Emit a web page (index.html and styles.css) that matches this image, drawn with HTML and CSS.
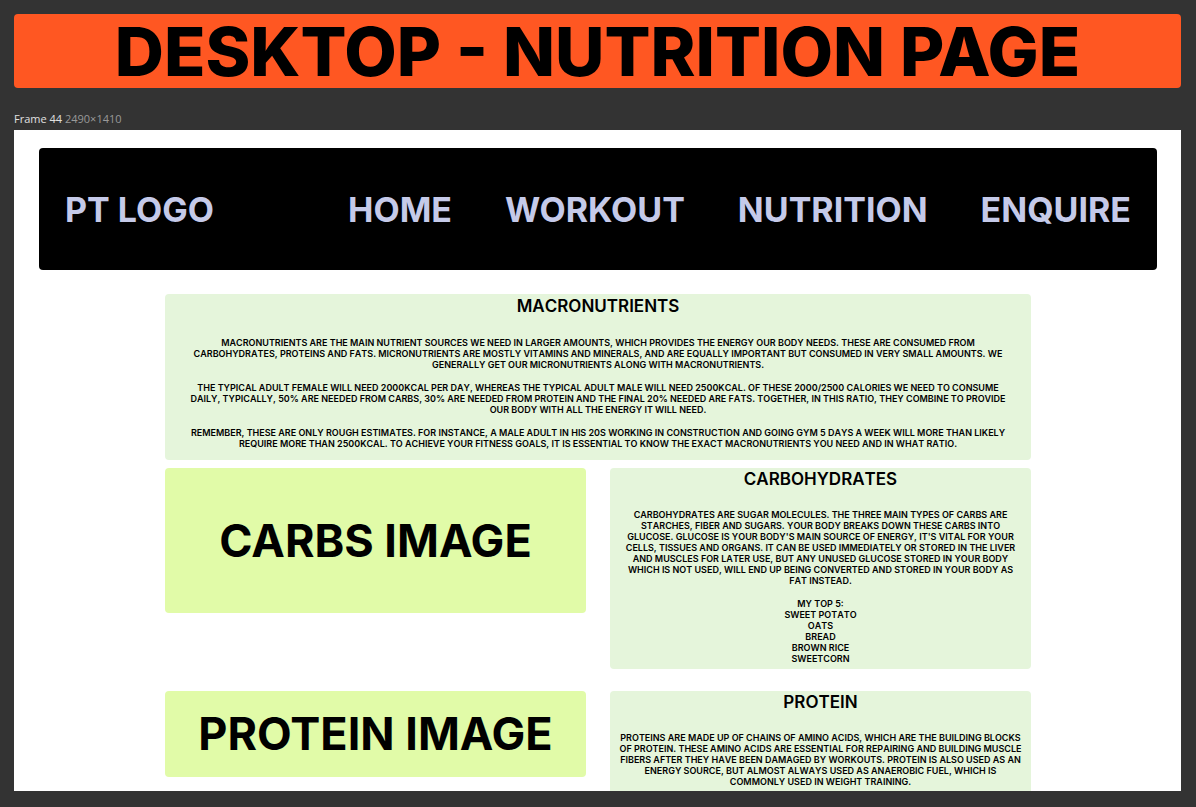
FILE: index.html
```html
<!DOCTYPE html>
<html lang="en">
<head>
<meta charset="utf-8">
<meta name="viewport" content="width=device-width, initial-scale=1">
<title>Desktop - Nutrition Page</title>
<link rel="stylesheet" href="styles.css">
</head>
<body>
<h1 class="banner">DESKTOP - NUTRITION PAGE</h1>
<p class="frame-label"><span class="frame-name">Frame 44</span> 2490×1410</p>
<div class="frame">
  <header class="nav">
    <a class="logo" href="#">PT LOGO</a>
    <nav class="links">
      <a href="#">HOME</a>
      <a href="#">WORKOUT</a>
      <a href="#">NUTRITION</a>
      <a href="#">ENQUIRE</a>
    </nav>
  </header>
  <main class="content">
    <section class="card intro">
      <h2>MACRONUTRIENTS</h2>
      <p>MACRONUTRIENTS ARE THE MAIN NUTRIENT SOURCES WE NEED IN LARGER AMOUNTS, WHICH PROVIDES THE ENERGY OUR BODY NEEDS. THESE ARE CONSUMED FROM<br>CARBOHYDRATES, PROTEINS AND FATS. MICRONUTRIENTS ARE MOSTLY VITAMINS AND MINERALS, AND ARE EQUALLY IMPORTANT BUT CONSUMED IN VERY SMALL AMOUNTS. WE<br>GENERALLY GET OUR MICRONUTRIENTS ALONG WITH MACRONUTRIENTS.</p>
      <p>THE TYPICAL ADULT FEMALE WILL NEED 2000KCAL PER DAY, WHEREAS THE TYPICAL ADULT MALE WILL NEED 2500KCAL. OF THESE 2000/2500 CALORIES WE NEED TO CONSUME<br>DAILY, TYPICALLY, 50% ARE NEEDED FROM CARBS, 30% ARE NEEDED FROM PROTEIN AND THE FINAL 20% NEEDED ARE FATS. TOGETHER, IN THIS RATIO, THEY COMBINE TO PROVIDE<br>OUR BODY WITH ALL THE ENERGY IT WILL NEED.</p>
      <p>REMEMBER, THESE ARE ONLY ROUGH ESTIMATES. FOR INSTANCE, A MALE ADULT IN HIS 20S WORKING IN CONSTRUCTION AND GOING GYM 5 DAYS A WEEK WILL MORE THAN LIKELY<br>REQUIRE MORE THAN 2500KCAL. TO ACHIEVE YOUR FITNESS GOALS, IT IS ESSENTIAL TO KNOW THE EXACT MACRONUTRIENTS YOU NEED AND IN WHAT RATIO.</p>
    </section>
    <div class="row">
      <div class="image carbs">CARBS IMAGE</div>
      <section class="card">
        <h2>CARBOHYDRATES</h2>
        <p>CARBOHYDRATES ARE SUGAR MOLECULES. THE THREE MAIN TYPES OF CARBS ARE<br>STARCHES, FIBER AND SUGARS. YOUR BODY BREAKS DOWN THESE CARBS INTO<br>GLUCOSE. GLUCOSE IS YOUR BODY'S MAIN SOURCE OF ENERGY, IT'S VITAL FOR YOUR<br>CELLS, TISSUES AND ORGANS. IT CAN BE USED IMMEDIATELY OR STORED IN THE LIVER<br>AND MUSCLES FOR LATER USE, BUT ANY UNUSED GLUCOSE STORED IN YOUR BODY<br>WHICH IS NOT USED, WILL END UP BEING CONVERTED AND STORED IN YOUR BODY AS<br>FAT INSTEAD.</p>
        <p>MY TOP 5:<br>SWEET POTATO<br>OATS<br>BREAD<br>BROWN RICE<br>SWEETCORN</p>
      </section>
    </div>
    <div class="row">
      <div class="image protein">PROTEIN IMAGE</div>
      <section class="card cut">
        <h2>PROTEIN</h2>
        <p>PROTEINS ARE MADE UP OF CHAINS OF AMINO ACIDS, WHICH ARE THE BUILDING BLOCKS<br>OF PROTEIN. THESE AMINO ACIDS ARE ESSENTIAL FOR REPAIRING AND BUILDING MUSCLE<br>FIBERS AFTER THEY HAVE BEEN DAMAGED BY WORKOUTS. PROTEIN IS ALSO USED AS AN<br>ENERGY SOURCE, BUT ALMOST ALWAYS USED AS ANAEROBIC FUEL, WHICH IS<br>COMMONLY USED IN WEIGHT TRAINING.</p>
      </section>
    </div>
  </main>
</div>
</body>
</html>
```
FILE: styles.css
```css
* { box-sizing: border-box; }
body {
  margin: 0;
  padding: 14px 15px 16px 14px;
  background: #333333;
  color: #000000;
  font-family: Inter, "Liberation Sans", sans-serif;
}
h1, h2, p { margin: 0; }
.banner {
  padding: 1px 0;
  border-radius: 4px;
  background: #ff5722;
  font-size: 68px;
  line-height: 72px;
  font-weight: 800;
  text-align: center;
}
.frame-label {
  padding: 21px 0 1px;
  color: #999999;
  font-family: "Open Sans", "Noto Sans", sans-serif;
  font-size: 11px;
  line-height: 20px;
}
.frame-name { color: #e0e0e0; }
.frame {
  padding: 18px 24px 0 25px;
  background: #ffffff;
}
.nav {
  display: flex;
  align-items: center;
  justify-content: space-between;
  padding: 41px 26px 39px;
  border-radius: 4px;
  background: #000000;
  font-size: 34px;
  line-height: 42px;
  font-weight: 700;
}
.nav a {
  color: #c5cae9;
  text-decoration: none;
}
.links {
  display: flex;
  gap: 53px;
}
.content {
  display: flex;
  flex-direction: column;
  gap: 22px;
  padding: 24px 126px 0;
}
.card {
  padding-bottom: 5px;
  border-radius: 4px;
  background: #e5f5db;
  font-size: 9px;
  line-height: 11px;
  font-weight: 600;
  font-kerning: none;
  text-align: center;
  white-space: nowrap;
}
.card h2 {
  padding-bottom: 19px;
  font-size: 17px;
  line-height: 22px;
  font-weight: 600;
}
.card p { padding-bottom: 12px; }
.card p:last-child { padding-bottom: 0; }
.intro {
  margin-bottom: -14px;
  padding: 1px 0 11px;
}
.intro h2 { padding-bottom: 20px; }
.cut {
  padding-bottom: 4px;
  border-radius: 4px 4px 0 0;
}
.row {
  display: grid;
  grid-template-columns: 1fr 1fr;
  gap: 24px;
  align-items: start;
}
.image {
  display: flex;
  align-items: center;
  justify-content: center;
  border-radius: 4px;
  background: #e1fba8;
  font-size: 45px;
  line-height: 56px;
  font-weight: 700;
}
.carbs { padding: 45px 0 44px; }
.protein { padding: 15px 0; }
```
